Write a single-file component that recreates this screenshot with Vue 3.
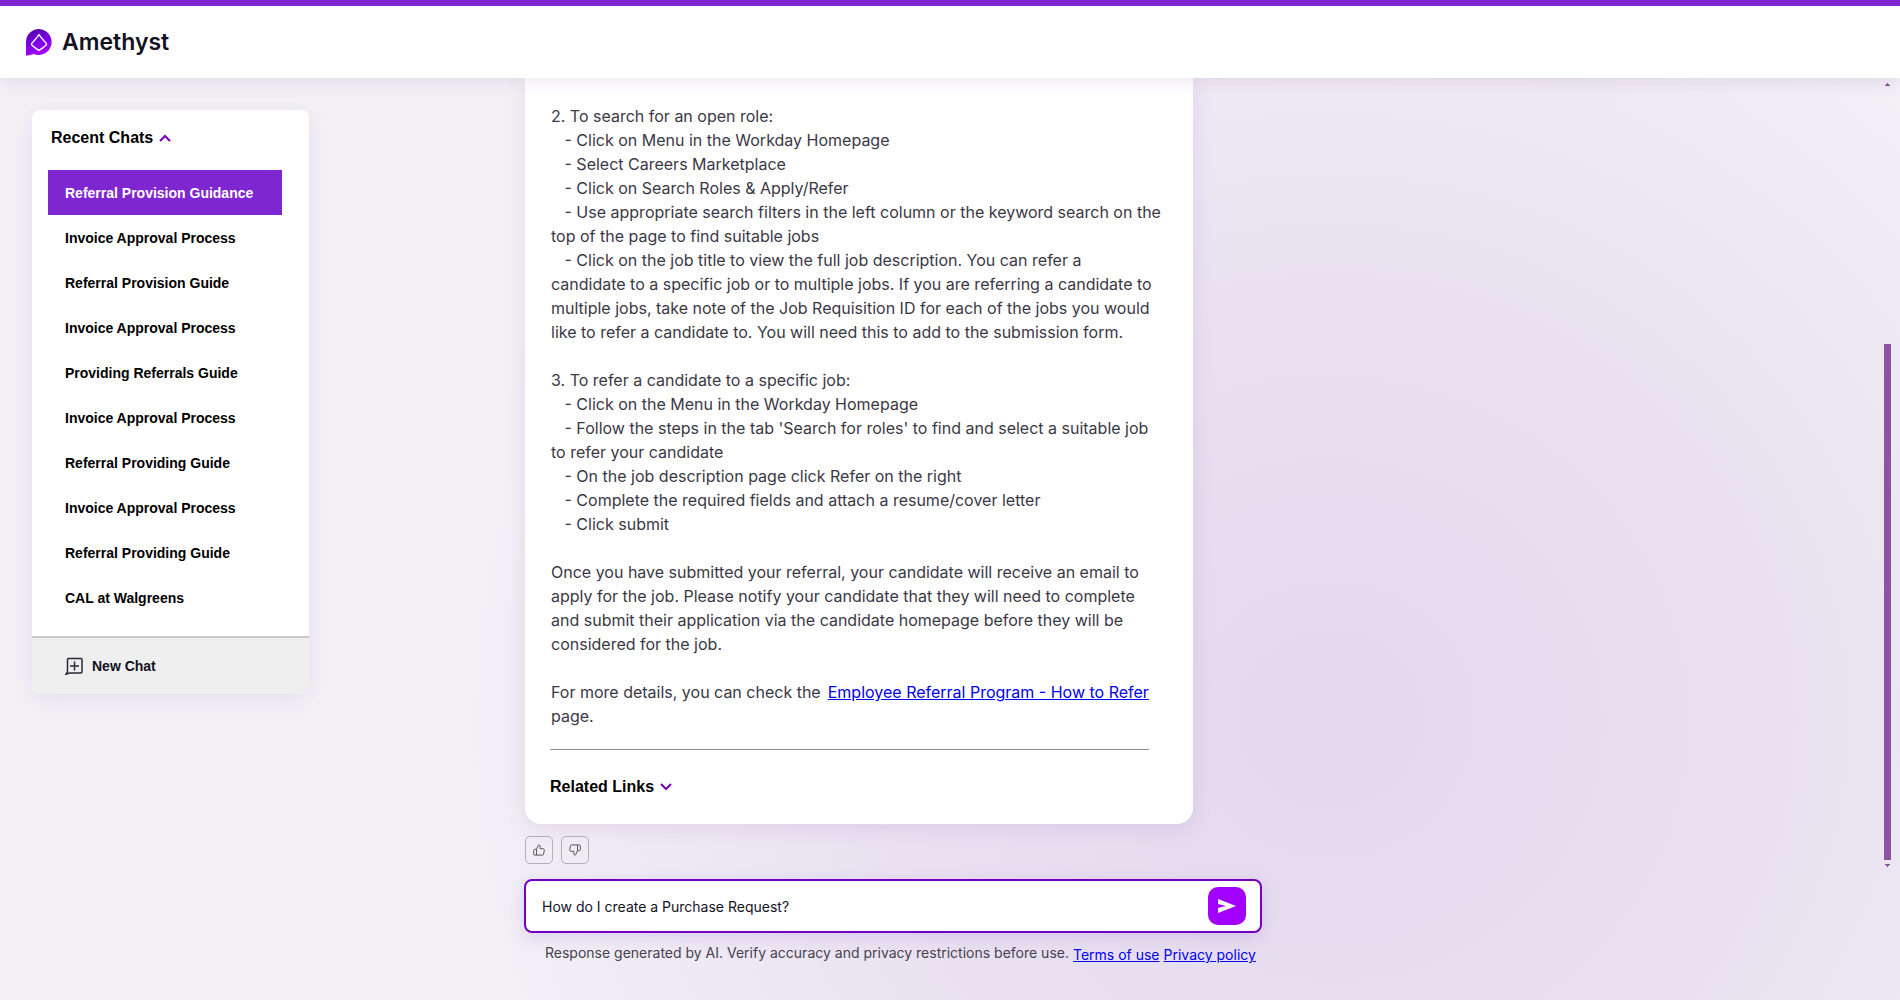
<script setup>
import { ref } from 'vue'

const chats = [
  'Referral Provision Guidance',
  'Invoice Approval Process',
  'Referral Provision Guide',
  'Invoice Approval Process',
  'Providing Referrals Guide',
  'Invoice Approval Process',
  'Referral Providing Guide',
  'Invoice Approval Process',
  'Referral Providing Guide',
  'CAL at Walgreens',
]
const active = ref(0)
const question = ref('How do I create a Purchase Request?')

const answer = [
  `2. To search for an open role:
   - Click on Menu in the Workday Homepage
   - Select Careers Marketplace
   - Click on Search Roles & Apply/Refer
   - Use appropriate search filters in the left column or the keyword search on the
top of the page to find suitable jobs
   - Click on the job title to view the full job description. You can refer a
candidate to a specific job or to multiple jobs. If you are referring a candidate to
multiple jobs, take note of the Job Requisition ID for each of the jobs you would
like to refer a candidate to. You will need this to add to the submission form.`,
  `3. To refer a candidate to a specific job:
   - Click on the Menu in the Workday Homepage
   - Follow the steps in the tab 'Search for roles' to find and select a suitable job
to refer your candidate
   - On the job description page click Refer on the right
   - Complete the required fields and attach a resume/cover letter
   - Click submit`,
  `Once you have submitted your referral, your candidate will receive an email to
apply for the job. Please notify your candidate that they will need to complete
and submit their application via the candidate homepage before they will be
considered for the job.`,
]
</script>

<template>
  <div class="page">
    <header class="topbar">
      <svg class="logo" viewBox="0 0 26 27" aria-hidden="true">
        <defs>
          <linearGradient id="gem" x1="0" y1="0" x2="0.3" y2="1">
            <stop offset="0" stop-color="#4a0a96" />
            <stop offset="0.5" stop-color="#7500e0" />
            <stop offset="1" stop-color="#a100ff" />
          </linearGradient>
        </defs>
        <path d="M13 0a13 13 0 1 1-5.6 24.9C5.500 25.600 2.500 26.500 0 26.500V13A13 13 0 0 1 13 0Z" fill="url(#gem)" />
        <path d="M13 5.500c1.600 2.700 4.600 6 7.100 8.700.6.700.5 1.500-.1 2.100-2.100 2-4.500 3.700-7 5-2.500-1.300-4.900-3-7-5-.6-.6-.7-1.400-.1-2.100C8.400 11.500 11.400 8.200 13 5.500Z" fill="none" stroke="#fff" stroke-width="1.400" stroke-linejoin="round" />
      </svg>
      <span class="brand">Amethyst</span>
    </header>

    <div class="body">
      <aside class="sidebar">
        <button class="heading" type="button">
          Recent Chats
          <svg class="chevron" viewBox="0 0 12 8" aria-hidden="true"><path d="M1 7l5-5 5 5" /></svg>
        </button>
        <nav class="chats">
          <button
            v-for="(chat, i) in chats"
            :key="i"
            type="button"
            class="chat"
            :class="{ active: i === active }"
            @click="active = i"
          >{{ chat }}</button>
        </nav>
        <button class="new-chat" type="button">
          <svg viewBox="0 0 18 18" aria-hidden="true">
            <path d="M2.500 2.500a1 1 0 0 1 1-1h12.500a1 1 0 0 1 1 1v12.500a1 1 0 0 1-1 1H4.500L1 17.300l1.500-2.800ZM9.500 4.500v9M5 9h9" />
          </svg>
          New Chat
        </button>
      </aside>

      <main class="panel">
        <div class="scroll">
          <div class="messages">
            <article class="card">
              <div class="answer">
                <p v-for="(paragraph, i) in answer" :key="i">{{ paragraph }}</p>
                <p class="more">
                  <span>For more details, you can check the</span>
                  <a href="#">Employee Referral Program - How to Refer</a>
                  <span>page.</span>
                </p>
              </div>
              <hr class="rule" />
              <button class="heading" type="button">
                Related Links
                <svg class="chevron" viewBox="0 0 12 8" aria-hidden="true"><path d="M1 1l5 5 5-5" /></svg>
              </button>
            </article>
            <div class="feedback">
              <button class="vote" type="button" aria-label="Good response">
                <svg viewBox="0 0 12 12" aria-hidden="true">
                  <path d="M3.500 11V5.300L5.400 1.200C5.600.6 7.100.6 7.100 2v2.700h3c.8 0 1.300.6 1.200 1.300l-.7 4.200c-.1.500-.5.900-1 .9H1.600a.9.900 0 0 1-.9-.9V6.200c0-.5.400-.9.900-.9h1.900" />
                </svg>
              </button>
              <button class="vote" type="button" aria-label="Bad response">
                <svg class="down" viewBox="0 0 12 12" aria-hidden="true">
                  <path d="M3.500 11V5.300L5.400 1.200C5.600.6 7.100.6 7.100 2v2.700h3c.8 0 1.300.6 1.200 1.300l-.7 4.200c-.1.500-.5.900-1 .9H1.600a.9.900 0 0 1-.9-.9V6.200c0-.5.400-.9.900-.9h1.900" />
                </svg>
              </button>
            </div>
          </div>
          <div class="scrollbar" aria-hidden="true">
            <svg viewBox="0 0 7 4"><path d="M3 0h1v1h1v1h1v1H1V2h1V1h1Z" /></svg>
            <div class="track"><div class="thumb"></div></div>
            <svg viewBox="0 0 7 4"><path d="M1 1h5v1H5v1H4v1H3V3H2V2H1Z" /></svg>
          </div>
        </div>

        <form class="composer" @submit.prevent>
          <input v-model="question" class="question" type="text" aria-label="Ask a question" />
          <button class="send" type="submit" aria-label="Send">
            <svg viewBox="0 0 18 16" aria-hidden="true"><path d="M0 1l18 7-18 7V10l8-2-8-2Z" fill="#fff" /></svg>
          </button>
        </form>
        <p class="notice">
          <span>Response generated by AI. Verify accuracy and privacy restrictions before use.</span>
          <a href="#">Terms of use</a>
          <a href="#">Privacy policy</a>
        </p>
      </main>
    </div>
  </div>
</template>

<style>
body {
  margin: 0;
}
</style>

<style scoped>
* {
  box-sizing: border-box;
}

.page {
  min-height: 100vh;
  display: flex;
  flex-direction: column;
  font-family: Inter, "Open Sans", sans-serif;
  font-weight: 400;
  color: #3b3846;
  background: radial-gradient(ellipse 900px 860px at 70% 72%, #e6d7ee 0%, #e6ddef 27%, #e9e1f1 50%, #eee9f4 75%, #f2f0f5 100%);
}

button {
  border: 0;
  padding: 0;
  background: none;
  font-family: "Liberation Sans", Arial, sans-serif;
  font-weight: 700;
  cursor: pointer;
}

a {
  color: #0000ee;
}

.topbar {
  position: relative;
  display: flex;
  align-items: center;
  gap: 10px;
  height: 78px;
  padding: 0 26px;
  border-top: 6px solid #7e26d0;
  background: #fff;
  box-shadow: 0 4px 16px rgba(117, 40, 130, 0.1);
}

.logo {
  width: 26px;
  height: 27px;
}

.brand {
  font-size: 23px;
  font-weight: 600;
  color: #14121f;
}

.body {
  flex: 1;
  display: flex;
  gap: 215px;
  padding-left: 32px;
}

.sidebar {
  flex: 0 0 277px;
  align-self: flex-start;
  margin-top: 32px;
  border-radius: 8px;
  background: #fff;
  box-shadow: 0 4px 20px rgba(160, 60, 190, 0.1);
  overflow: hidden;
}

.heading {
  display: flex;
  align-items: center;
  gap: 6px;
  font-size: 16px;
  line-height: 20px;
  color: #000;
}

.sidebar .heading {
  margin: 18px 19px 22px;
}

.chevron {
  width: 12px;
  height: 8px;
  fill: none;
  stroke: #7500c0;
  stroke-width: 2;
}

.chats {
  display: flex;
  flex-direction: column;
  padding: 0 27px 16px 16px;
}

.chat {
  height: 45px;
  padding-left: 17px;
  text-align: left;
  font-size: 14px;
  color: #000;
}

.chat.active {
  background: #7e26d0;
  color: #fff;
}

.new-chat {
  display: flex;
  align-items: center;
  gap: 9px;
  width: 100%;
  height: 58px;
  padding-left: 33px;
  border-top: 2px solid #c9c9c9;
  background: #efefef;
  font-size: 14px;
  color: #14121f;
}

.new-chat svg {
  width: 18px;
  height: 18px;
  fill: none;
  stroke: #2b2836;
  stroke-width: 1.500;
}

.panel {
  flex: 1;
  min-width: 0;
}

.scroll {
  display: flex;
  justify-content: space-between;
  padding-right: 9px;
  margin-bottom: 12px;
}

.messages {
  flex: 0 1 669px;
  padding: 0 0 3px 1px;
}

.card {
  padding: 26px 25px 27px;
  border-radius: 0 0 16px 16px;
  background: #fff;
  box-shadow: 0 4px 20px rgba(140, 60, 170, 0.12);
}

.answer {
  display: flex;
  flex-direction: column;
  gap: 24px;
  padding-left: 1px;
  font-size: 16px;
  line-height: 24px;
}

.answer p {
  margin: 0;
  white-space: pre-wrap;
}

.answer .more {
  display: flex;
  flex-wrap: wrap;
  column-gap: 7px;
}

.rule {
  margin: 21px 19px 27px 0;
  border: 0;
  border-top: 1px solid #8e8e8e;
}

.feedback {
  display: flex;
  gap: 8px;
  margin-top: 12px;
}

.vote {
  display: grid;
  place-items: center;
  width: 28px;
  height: 28px;
  border: 1px solid #b3aeb8;
  border-radius: 5px;
}

.vote svg {
  width: 12px;
  height: 12px;
  fill: none;
  stroke: #5a5663;
}

.vote .down {
  transform: rotate(180deg);
}

.scrollbar {
  display: flex;
  flex-direction: column;
  gap: 3px;
  width: 7px;
  padding-top: 5px;
}

.scrollbar svg {
  width: 7px;
  height: 4px;
  fill: #8d52a1;
}

.track {
  flex: 1;
  display: flex;
  align-items: flex-end;
}

.thumb {
  width: 100%;
  height: 67%;
  background: #8d52a1;
}

.composer {
  display: flex;
  align-items: center;
  max-width: 738px;
  height: 54px;
  padding: 0 14px 0 16px;
  border: 2px solid #7500c0;
  border-radius: 8px;
  background: #fff;
  box-shadow: 0 4px 16px rgba(117, 60, 220, 0.16);
}

.question {
  flex: 1;
  min-width: 0;
  padding: 0;
  border: 0;
  outline: 0;
  background: none;
  font: inherit;
  font-size: 14px;
  color: #14121f;
}

.send {
  display: grid;
  place-items: center;
  width: 38px;
  height: 38px;
  border-radius: 10px;
  background: #a100ff;
}

.send svg {
  width: 18px;
  height: 16px;
}

.notice {
  display: flex;
  gap: 4px;
  margin: 10px 0 0;
  padding-left: 21px;
  font-size: 14px;
  line-height: 20px;
  white-space: nowrap;
  color: #46424f;
}

.notice a {
  padding-top: 2px;
}
</style>
